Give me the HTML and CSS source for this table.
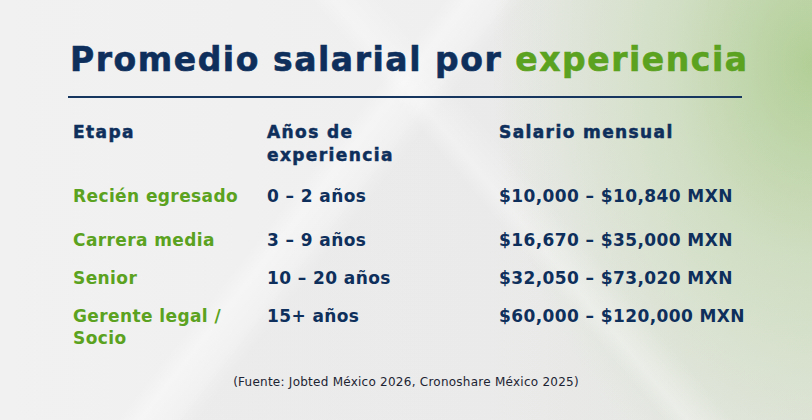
FILE: index.html
```html
<!DOCTYPE html>
<html lang="es">
<head>
<meta charset="utf-8">
<title>Promedio salarial por experiencia</title>
<link rel="stylesheet" href="styles.css">
</head>
<body>
<main class="card">
  <h1 class="title">Promedio salarial por <span class="accent">experiencia</span></h1>
  <div class="rule"></div>
  <div class="table">
    <div class="head">Etapa</div>
    <div class="head">Años de<br>experiencia</div>
    <div class="head">Salario mensual</div>

    <div class="stage r1">Recién egresado</div>
    <div class="years r1">0 – 2 años</div>
    <div class="salary r1">$10,000 – $10,840 MXN</div>

    <div class="stage">Carrera media</div>
    <div class="years">3 – 9 años</div>
    <div class="salary">$16,670 – $35,000 MXN</div>

    <div class="stage">Senior</div>
    <div class="years">10 – 20 años</div>
    <div class="salary">$32,050 – $73,020 MXN</div>

    <div class="stage">Gerente legal /<br>Socio</div>
    <div class="years">15+ años</div>
    <div class="salary">$60,000 – $120,000 MXN</div>
  </div>
  <p class="source">(Fuente: Jobted México 2026, Cronoshare México 2025)</p>
</main>
</body>
</html>
```

FILE: styles.css
```css
html, body {
  margin: 0;
  padding: 0;
}

body {
  width: 812px;
  height: 420px;
  overflow: hidden;
  font-family: "DejaVu Sans", "Inter", sans-serif;
}

.card {
  box-sizing: border-box;
  width: 812px;
  height: 420px;
  padding: 40px 30px 0 68px;
  background:
    linear-gradient(128deg, transparent 0 39%, rgba(255,255,255,0.35) 41%, transparent 45%),
    linear-gradient(50deg, transparent 0 57%, rgba(255,255,255,0.3) 59%, transparent 63%),
    linear-gradient(128deg, transparent 0 44%, rgba(0,0,0,0.018) 46% 100%),
    radial-gradient(ellipse 320px 440px at 100% 15%, rgba(150,195,105,0.6) 0%, rgba(170,205,135,0.32) 45%, rgba(200,220,180,0) 100%),
    linear-gradient(90deg, #f1f1f1 0%, #efefef 60%, #e7ebe3 100%);
}

.title {
  margin: 0 0 0 2px;
  font-size: 33px;
  line-height: 40px;
  font-weight: 700;
  letter-spacing: 1.55px;
  -webkit-text-stroke: 0.6px currentColor;
  color: #0e2f5b;
  white-space: nowrap;
}

.accent {
  color: #5aa220;
}

.rule {
  margin-top: 16px;
  width: 674px;
  height: 2px;
  background: #16365f;
}

.table {
  display: grid;
  grid-template-columns: 194px 232px 1fr;
  row-gap: 16px;
  margin: 23px 0 0 5px;
  color: #0e2f5b;
}

.head {
  font-size: 17px;
  line-height: 23px;
  font-weight: 700;
  letter-spacing: 1.4px;
  -webkit-text-stroke: 0.5px currentColor;
  margin-bottom: 2px;
  white-space: nowrap;
}

.stage, .years, .salary {
  font-size: 17px;
  line-height: 22px;
  font-weight: 700;
  letter-spacing: 0.4px;
}

.salary, .years {
  white-space: nowrap;
}

.stage {
  color: #5aa220;
}

.r1 {
  margin-bottom: 6px;
}

.source {
  margin: 25px -30px 0 -68px;
  text-align: center;
  font-size: 12px;
  line-height: 16px;
  letter-spacing: 0.25px;
  color: #1d2433;
}
```
